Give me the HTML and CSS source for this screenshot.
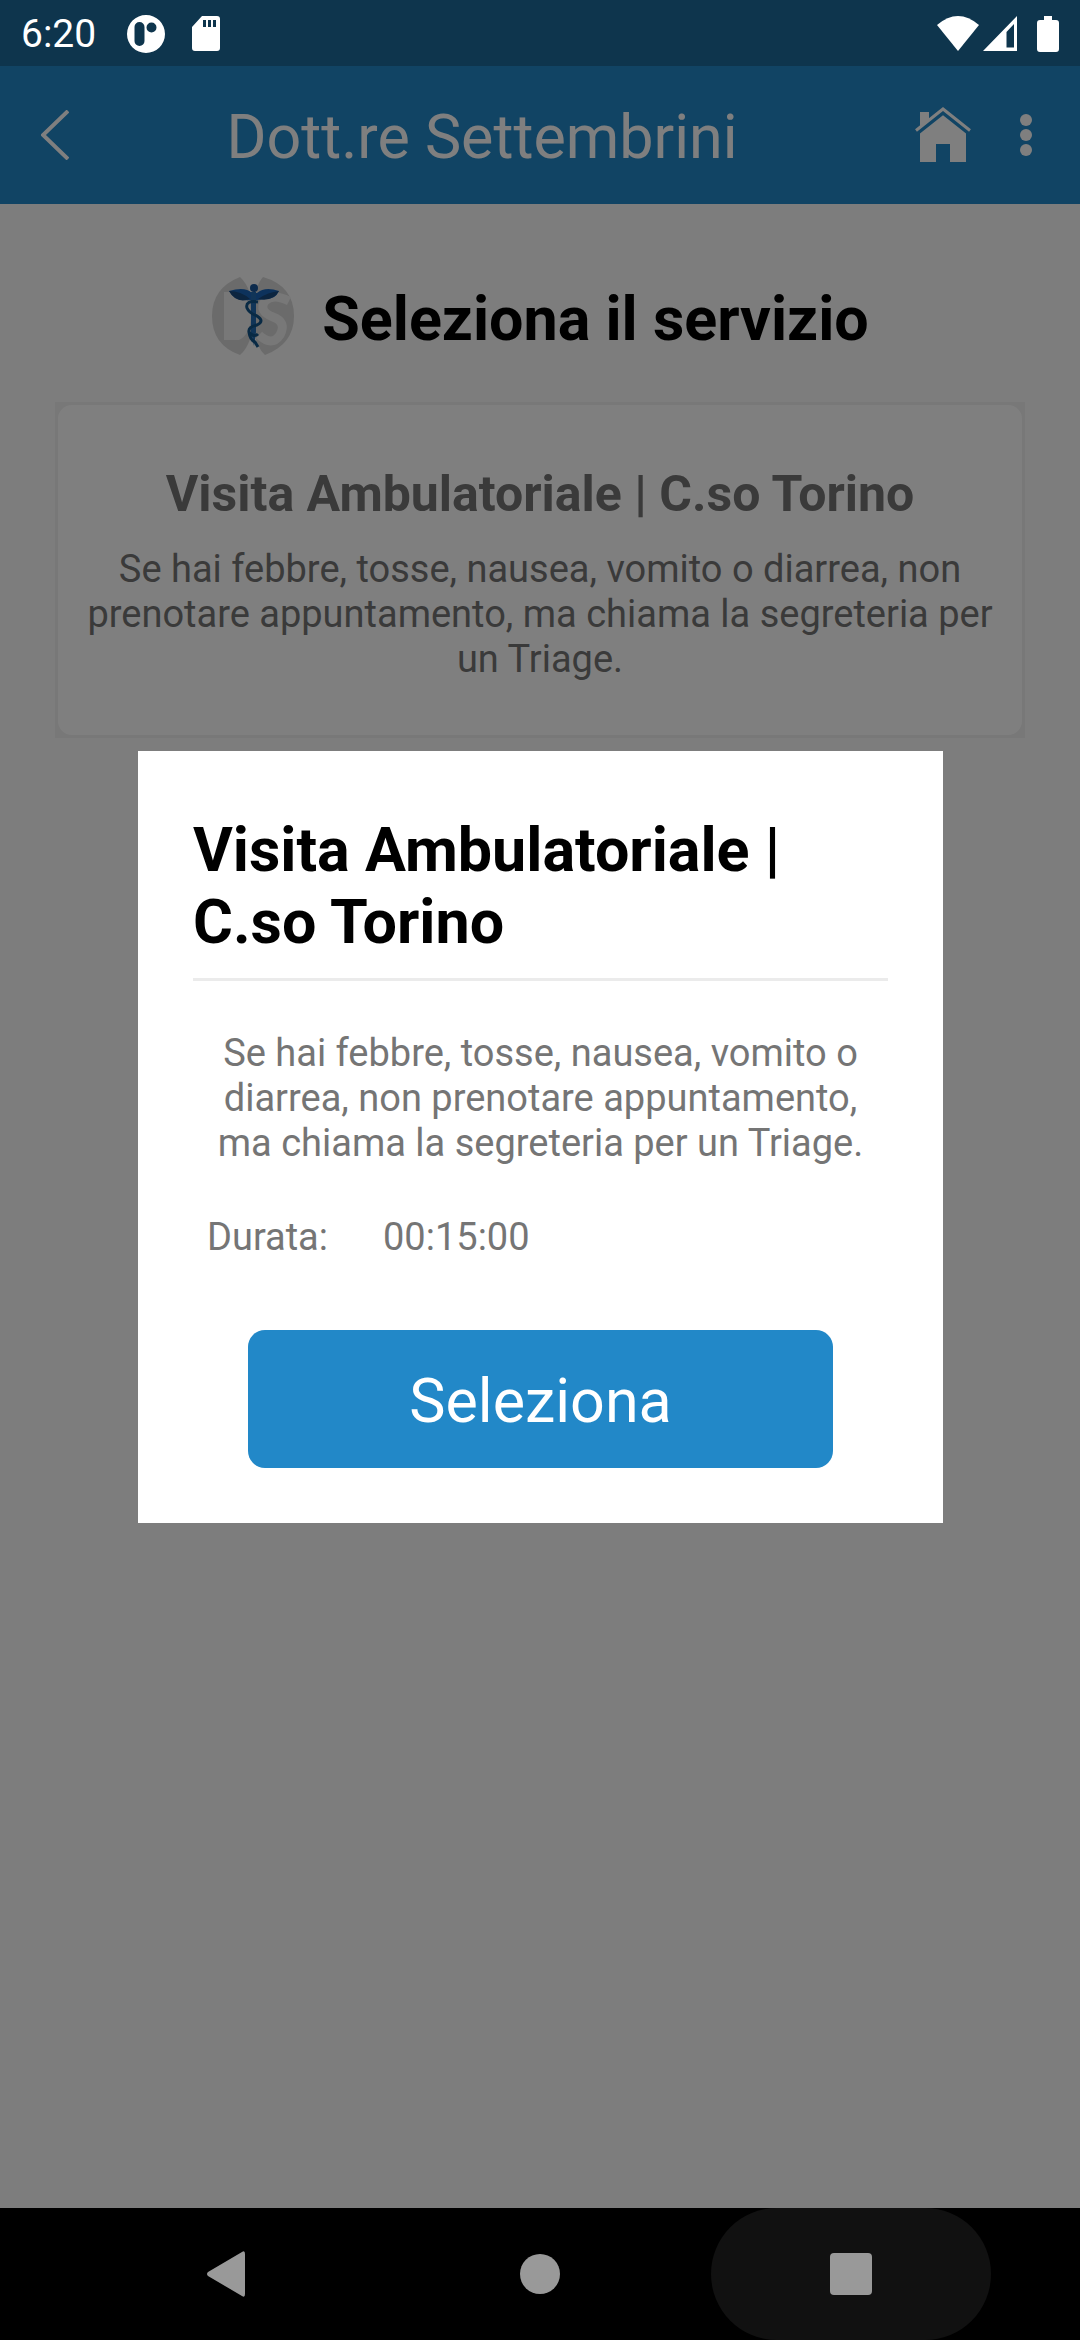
FILE: index.html
```html
<!DOCTYPE html>
<html lang="it">
<head>
<meta charset="utf-8">
<meta name="viewport" content="width=device-width, initial-scale=1">
<title>Dott.re Settembrini</title>
<link rel="stylesheet" href="styles.css">
</head>
<body class="screen">
<div class="status-bar">
  <span class="clock">6:20</span>
  <div class="status-left">
    <svg width="38" height="38" viewBox="0 0 38 38" aria-hidden="true"><path fill="#fff" fill-rule="evenodd" d="M19 0a19 19 0 1 1 0 38a19 19 0 1 1 0-38zM12.500 7a5 5 0 0 0-5 5v14a5 5 0 0 0 10 0V12a5 5 0 0 0-5-5zM24.500 7.500a5 5 0 1 0 0 10a5 5 0 1 0 0-10z"/></svg>
    <svg width="28" height="36" viewBox="0 0 28 36" aria-hidden="true"><path fill="#fff" fill-rule="evenodd" d="M10 0H25a3 3 0 0 1 3 3V32a3 3 0 0 1-3 3H3a3 3 0 0 1-3-3V11zM11 4v7h3V4zM16 4v7h3V4zM21 4v7h3V4z"/></svg>
  </div>
  <div class="status-right">
    <svg width="42" height="36" viewBox="0 0 42 36" aria-hidden="true"><path fill="#fff" d="M0 9Q21-9 42 9L21 35z"/></svg>
    <svg width="34" height="36" viewBox="0 0 34 36" aria-hidden="true"><path fill="#fff" fill-rule="evenodd" d="M34 0V35H0zM31 8L23.500 16V31.500H31z"/></svg>
    <svg class="battery" width="22" height="36" viewBox="0 0 22 36" aria-hidden="true"><path fill="#fff" d="M7 0h8v4h4a3 3 0 0 1 3 3v26a3 3 0 0 1-3 3H3a3 3 0 0 1-3-3V7a3 3 0 0 1 3-3h4z"/></svg>
  </div>
</div>
<div class="app">
  <header class="app-bar">
    <button aria-label="Indietro"><svg width="28" height="50" viewBox="0 0 28 50"><path d="M27 1L2 25L27 49" fill="none" stroke="#fff" stroke-width="4"/></svg></button>
    <h1 class="app-title">Dott.re Settembrini</h1>
    <div class="actions">
      <button aria-label="Home"><svg width="56" height="56" viewBox="0 0 56 56"><path fill="#fff" fill-rule="evenodd" d="M5 55V25L28 6L51 25V55H35V37H21V55zM5 5H14V18L5 22z"/><path d="M-1 28L28 5L57 28" fill="none" stroke="#2288c8" stroke-width="5"/><path d="M1 23.500L28 2L55 23.500" fill="none" stroke="#fff" stroke-width="3"/></svg></button>
      <button aria-label="Altre opzioni"><svg width="12" height="42" viewBox="0 0 12 42"><g fill="#fff"><circle cx="6" cy="6" r="6"/><circle cx="6" cy="21" r="6"/><circle cx="6" cy="36" r="6"/></g></svg></button>
    </div>
  </header>
  <main class="content">
    <div class="heading">
      <svg width="84" height="84" viewBox="0 0 84 84" aria-hidden="true">
        <path fill="#d6d6d6" d="M29 1Q42 13 42 40Q42 68 29 79Q1 69 1 40Q1 12 29 1z"/>
        <path fill="#d6d6d6" d="M52 1Q42 12 42 40Q42 68 54 79Q83 68 83 40Q83 10 52 1z"/>
        <path fill="#f0f0f0" d="M13 16H28Q40 23 40 41Q39 59 28 64H13z"/>
        <path fill="none" stroke="#f0f0f0" stroke-width="9" d="M78 25Q62 17 54 25Q47 35 62 41Q76 46 69 59Q61 71 48 59"/>
        <path fill="#1b65b8" d="M18 15Q34 10 41 17H46Q54 10 68 15Q64 24 53 23L47 24H39Q24 26 18 15z"/>
        <path fill="#194a80" d="M18 15Q30 15 39 23Q25 28 18 15zM68 15Q57 16 47 23Q62 26 68 15z"/>
        <circle cx="43" cy="12" r="4" fill="#1a579a"/>
        <path fill="#236bb0" d="M40 16h5v40l-2 14l-3-14z"/>
        <path fill="none" stroke="#125489" stroke-width="3" d="M47 26Q34 24 36 32Q38 37 46 40Q54 45 46 49Q37 51 38 56Q43 62 47 58M38 56Q39 64 44 66L47 71"/>
      </svg>
      <h2 class="heading-text">Seleziona il servizio</h2>
    </div>
    <div class="card-frame">
      <article class="card">
        <h3 class="card-title">Visita Ambulatoriale | C.so Torino</h3>
        <p class="body-text">Se hai febbre, tosse, nausea, vomito o diarrea, non prenotare appuntamento, ma chiama la segreteria per un Triage.</p>
      </article>
    </div>
  </main>
  <div class="overlay">
    <section class="dialog" role="dialog" aria-modal="true" aria-labelledby="dialog-title">
      <h2 class="dialog-title" id="dialog-title">Visita Ambulatoriale | C.so Torino</h2>
      <p class="body-text dialog-text">Se hai febbre, tosse, nausea, vomito o diarrea, non prenotare appuntamento, ma chiama la segreteria per un Triage.</p>
      <dl class="duration"><dt>Durata:</dt><dd>00:15:00</dd></dl>
      <button class="select-button">Seleziona</button>
    </section>
  </div>
</div>
<nav class="nav-bar" aria-label="Navigazione">
  <button class="nav-button" aria-label="Indietro"><svg width="46" height="46" viewBox="0 0 46 46"><path fill="#999" d="M36 1Q39-1 39 3V43Q39 47 36 45L2 25Q0 23 2 21z"/></svg></button>
  <button class="nav-button" aria-label="Home"><svg width="40" height="40" viewBox="0 0 40 40"><circle cx="20" cy="20" r="20" fill="#999"/></svg></button>
  <button class="nav-button nav-pressed" aria-label="App recenti"><svg width="42" height="42" viewBox="0 0 42 42"><rect width="42" height="42" rx="4" fill="#999"/></svg></button>
</nav>
</body>
</html>
```

FILE: styles.css
```css
* {
  box-sizing: border-box;
}

h1, h2, h3, p, dl, dd {
  margin: 0;
}

svg {
  display: block;
}

button {
  border: 0;
  padding: 0;
  background: none;
  font: inherit;
}

.screen {
  margin: 0;
  min-height: 100vh;
  display: flex;
  flex-direction: column;
  font-family: Roboto, sans-serif;
  background: #000;
  color: #757575;
}

.status-bar {
  display: flex;
  align-items: center;
  height: 66px;
  padding: 2px 21px 0;
  background: #0e354d;
  color: #fff;
}

.clock {
  font-size: 39px;
  line-height: 46px;
}

.status-left {
  display: flex;
  align-items: center;
  gap: 27px;
  margin-left: 31px;
}

.status-right {
  display: flex;
  margin-left: auto;
  gap: 4px;
}

.battery {
  margin-left: 16px;
}

.app {
  position: relative;
  flex: 1;
  display: flex;
  flex-direction: column;
  background: #fafafa;
}

.app-bar {
  display: flex;
  align-items: center;
  height: 138px;
  padding: 0 48px 0 41px;
  background: #2288c8;
}

.app-title {
  flex: 1;
  padding: 4px 20px 0 0;
  font-size: 61px;
  line-height: 72px;
  font-weight: 400;
  text-align: center;
  color: #fff;
}

.actions {
  display: flex;
  align-items: center;
  gap: 49px;
}

.content {
  padding: 72px 55px;
}

.heading {
  display: flex;
  align-items: center;
  justify-content: center;
  gap: 27px;
  height: 84px;
}

.heading-text {
  padding-top: 2px;
  font-size: 61px;
  line-height: 72px;
  color: #000;
}

.card-frame {
  margin-top: 42px;
  padding: 3px;
  background: #f0f0f0;
}

.card {
  padding: 60px 24px 53px;
  border-radius: 14px;
  background: #fff;
  text-align: center;
}

.card-title {
  margin-bottom: 24px;
  font-size: 50px;
  line-height: 58px;
}

.body-text {
  font-size: 38px;
  line-height: 45px;
  text-align: center;
}

.overlay {
  position: absolute;
  inset: 0;
  display: flex;
  align-items: center;
  justify-content: center;
  padding: 0 137px 0 138px;
  background: rgba(0, 0, 0, 0.5);
}

.dialog {
  display: flex;
  flex-direction: column;
  flex: 1;
  padding: 63px 55px 55px;
  background: #fff;
}

.dialog-title {
  padding-bottom: 20px;
  border-bottom: 3px solid #ebebeb;
  font-size: 61px;
  line-height: 72px;
  color: #000;
}

.dialog-text {
  padding: 50px 14px 0;
}

.duration {
  display: flex;
  gap: 55px;
  margin: 49px 14px 0;
  font-size: 38px;
  line-height: 45px;
}

.select-button {
  height: 138px;
  margin: 70px 55px 0;
  padding-top: 3px;
  border-radius: 17px;
  background: #2288c8;
  font-size: 61px;
  color: #fff;
}

.nav-bar {
  display: flex;
  justify-content: center;
  gap: 31px;
  height: 132px;
}

.nav-button {
  display: flex;
  align-items: center;
  justify-content: center;
  width: 280px;
  border-radius: 66px;
}

.nav-pressed {
  background: #111;
}
```
